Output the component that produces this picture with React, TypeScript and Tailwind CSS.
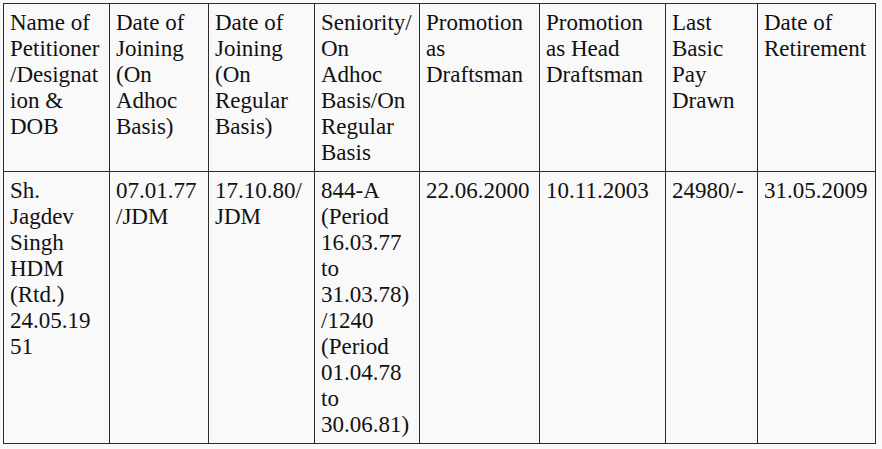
import React from "react"

type Cell = React.ReactNode

const headers: Cell[] = [
    "Name of Petitioner /Designation & DOB",
    "Date of Joining (On Adhoc Basis)",
    "Date of Joining (On Regular Basis)",
    "Seniority/ On Adhoc Basis/On Regular Basis",
    "Promotion as Draftsman",
    "Promotion as Head Draftsman",
    "Last Basic Pay Drawn",
    "Date of Retirement",
]

const row: Cell[] = [
    <>Sh. Jagdev Singh HDM (Rtd.) 24.05.19<wbr />51</>,
    "07.01.77 /JDM",
    "17.10.80/ JDM",
    "844-A (Period 16.03.77 to 31.03.78) /1240 (Period 01.04.78 to 30.06.81)",
    "22.06.2000",
    "10.11.2003",
    "24980/-",
    "31.05.2009",
]

const widths = ["w-[106px]", "w-[99px]", "w-[106px]", "w-[105px]", "w-[120px]", "w-[126px]", "w-[92px]", "w-[118px]"]

const cellCls = "border border-[#2b2b2b] align-top text-left font-normal pl-[6px] pr-[7px] pt-[6px] pb-[5px] break-words"

export default function App() {
    return (
        <div className="min-h-screen w-full bg-[#f9f9f9] pt-[3px] pl-[3px] text-[#111] font-['Liberation_Serif',_'Times_New_Roman',_serif] text-[23px] leading-[26px]">
            {/* Petitioner service record */}
            <table className="table-fixed border-collapse w-[873px]">
                <colgroup>
                    {widths.map((w, i) => (
                        <col key={i} className={w} />
                    ))}
                </colgroup>
                <thead>
                    <tr>
                        {headers.map((h, i) => (
                            <th key={i} className={cellCls}>{h}</th>
                        ))}
                    </tr>
                </thead>
                <tbody>
                    <tr>
                        {row.map((c, i) => (
                            <td key={i} className={cellCls}>{c}</td>
                        ))}
                    </tr>
                </tbody>
            </table>
        </div>
    )
}
